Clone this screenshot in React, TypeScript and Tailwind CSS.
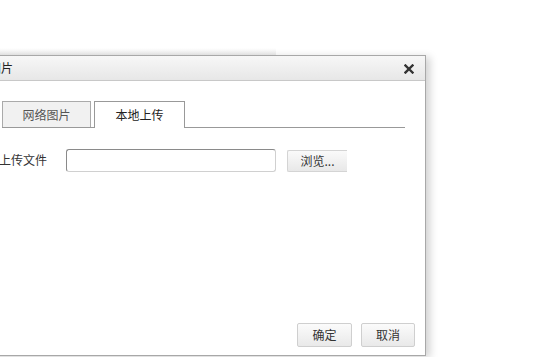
import React from "react";

const font = { fontFamily: '"Noto Sans CJK SC", "Liberation Sans", sans-serif' };

export default function App() {
  return (
    <div className="relative w-[533px] h-[357px] bg-white overflow-hidden text-[12px] text-[#333]" style={font}>
      {/* faint shadow of the element behind */}
      <div className="absolute left-0 top-[48px] w-[276px] h-[7px] bg-gradient-to-b from-white to-[#ececec]" />
      {/* dialog */}
      <div className="absolute left-[-20px] top-[55px] w-[446px] h-[301px] bg-white border border-[#a8a8a8] shadow-[4px_2px_8px_rgba(0,0,0,0.18)] flex flex-col">
        <div className="h-[25px] shrink-0 flex items-center justify-between pl-[8px] pr-[11px] bg-gradient-to-b from-[#f7f7f7] to-[#e7e7e7] border-b border-[#c8c8c8]">
          <span className="text-[12px] text-[#222] leading-none">图片</span>
          <svg width="10" height="10" viewBox="0 0 10 10" className="mt-[1px]">
            <path d="M1.5 1.5 L8.5 8.5 M8.5 1.5 L1.5 8.5" stroke="#333" strokeWidth="2.4" strokeLinecap="square" />
          </svg>
        </div>
        <div className="flex-1 flex flex-col pl-[21px] pr-[20px] pt-[20px]">
          <div className="flex items-end gap-[3px] border-b border-[#999] h-[27px]">
            <div className="w-[89px] h-[26px] flex items-center justify-center border border-b-0 border-[#aaa] bg-[#f1f1f1] text-[#555]">
              网络图片
            </div>
            <div className="w-[91px] h-[27px] flex items-center justify-center border border-b-0 border-[#999] bg-white text-[#222] mb-[-1px]">
              本地上传
            </div>
          </div>
          <div className="flex items-center mt-[20px] ml-[-3px]">
            <span className="w-[67px] text-[#333]">上传文件</span>
            <div className="w-[210px] h-[23px] rounded-[3px] border border-[#d0d0d0] border-t-[#8a8a8a] border-l-[#8a8a8a] bg-white" />
            <div className="ml-[11px] w-[60px] h-[22px] mt-[2px] flex items-center justify-center rounded-l-[2px] border border-r-0 border-[#d4d4d4] bg-gradient-to-b from-[#fafafa] to-[#e8e8e8] text-[#333]">
              浏览...
            </div>
          </div>
          <div className="flex-1" />
          <div className="flex justify-end gap-[9px] mr-[-10px] mb-[8px]">
            <div className="w-[55px] h-[24px] flex items-center justify-center rounded-[2px] border border-[#cfcfcf] bg-gradient-to-b from-[#fbfbfb] to-[#e9e9e9] text-[#333]">
              确定
            </div>
            <div className="w-[54px] h-[24px] flex items-center justify-center rounded-[2px] border border-[#cfcfcf] bg-gradient-to-b from-[#fbfbfb] to-[#e9e9e9] text-[#333]">
              取消
            </div>
          </div>
        </div>
      </div>
    </div>
  );
}
